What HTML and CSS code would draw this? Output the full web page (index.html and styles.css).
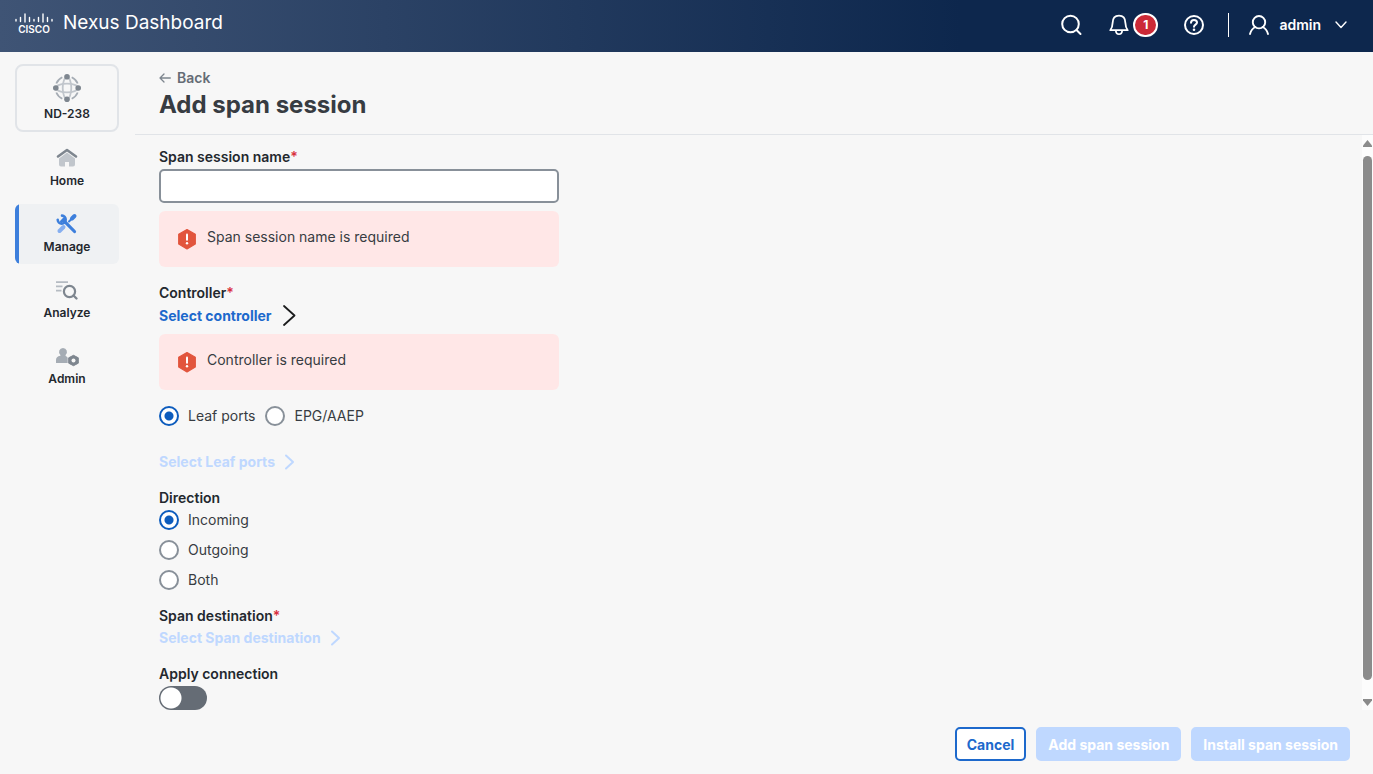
FILE: index.html
```html
<!DOCTYPE html>
<html lang="en">

<head>
    <meta charset="UTF-8">
    <meta name="viewport" content="width=device-width, initial-scale=1.0">
    <title>Nexus Dashboard</title>
    <link rel="stylesheet" href="styles.css">
</head>

<body>
    <header class="topbar">
        <div class="brand">
            <svg class="brand-logo" width="38" height="24" viewBox="0 0 38 24" role="img" aria-label="Cisco">
                <path d="M1 8.500v1.500M5.500 6.500v4M10 3v8M14.500 6.500v4M19 8.500v1.500M23.500 6.500v4M28 3v8M32.500 6.500v4M37 8.500v1.500" stroke="#fff" stroke-width="1.400" stroke-linecap="round" />
                <text x="19" y="22" text-anchor="middle">CISCO</text>
            </svg>
            <span class="brand-name">Nexus Dashboard</span>
        </div>
        <div class="topbar-actions">
            <button type="button" class="icon-btn" aria-label="Search">
                <svg width="22" height="22" viewBox="0 0 22 22" fill="none" stroke="#fff" stroke-width="2" stroke-linecap="round">
                    <circle cx="9.500" cy="10" r="8.300" />
                    <path d="M15.500 16l4 4" />
                </svg>
            </button>
            <button type="button" class="icon-btn bell" aria-label="Notifications">
                <svg width="20" height="22" viewBox="0 0 20 22" fill="none" stroke="#fff" stroke-width="1.800" stroke-linejoin="round">
                    <path d="M1.300 16.200C3 14 3.500 12.500 3.600 9 3.700 4.500 6 1.700 10 1.700s6.300 2.800 6.400 7.300c.1 3.500.6 5 2.300 7.200z" />
                    <path d="M6.800 16.500c.2 2.400 1.300 3.700 3.200 3.700s3-1.300 3.200-3.700" />
                </svg>
                <span class="badge">1</span>
            </button>
            <button type="button" class="icon-btn help" aria-label="Help">
                <svg width="20" height="20" viewBox="0 0 20 20" fill="none" stroke="#fff" stroke-width="2" stroke-linecap="round">
                    <circle cx="10" cy="10" r="9" />
                    <path d="M7 7.800C7 6 8.300 5 10 5s3 1 3 2.500c0 2-3 2.200-3 4.300" />
                    <circle cx="10" cy="14.800" r="1.300" fill="#fff" stroke="none" />
                </svg>
            </button>
            <span class="divider"></span>
            <button type="button" class="icon-btn user">
                <svg width="20" height="20" viewBox="0 0 20 20" fill="none" stroke="#fff" stroke-width="1.900" stroke-linecap="round">
                    <circle cx="10" cy="7.200" r="6.200" />
                    <path d="M1 19c.8-3.400 2.700-5.800 5.500-7M19 19c-.8-3.400-2.700-5.800-5.500-7" />
                </svg>
                <span>admin</span>
                <svg width="12" height="8" viewBox="0 0 12 8" fill="none" stroke="#fff" stroke-width="1.400" stroke-linecap="round" stroke-linejoin="round">
                    <path d="M1 1l5 5.500L11 1" />
                </svg>
            </button>
        </div>
    </header>

    <div class="layout">
        <nav class="sidebar">
            <a href="#" class="nav-card">
                <svg width="28" height="28" viewBox="0 0 28 28" fill="none">
                    <g stroke="#c1c6cc" stroke-width="1.800">
                        <ellipse cx="14" cy="14" rx="4.300" ry="11" />
                        <ellipse cx="14" cy="14" rx="11" ry="4.300" />
                    </g>
                    <path d="M3.300 9.500a12 12 0 0 1 6-6.200M18.700 3.300a12 12 0 0 1 6 6.200M24.700 18.500a12 12 0 0 1-6 6.200M9.300 24.700a12 12 0 0 1-6-6.200" stroke="#a5acb4" stroke-width="1.800" />
                    <g fill="#7e868f">
                        <circle cx="14" cy="2.800" r="2.800" />
                        <circle cx="14" cy="25.200" r="2.800" />
                        <circle cx="2.800" cy="14" r="2.800" />
                        <circle cx="25.200" cy="14" r="2.800" />
                    </g>
                </svg>
                <span>ND-238</span>
            </a>
            <a href="#" class="nav-item">
                <svg width="24" height="24" viewBox="0 0 24 24" fill="none">
                    <path d="M12 7.500l8 6V19.500a2 2 0 0 1-2 2h-4V17h-4v4.500H6a2 2 0 0 1-2-2v-6z" fill="#c1c6cc" />
                    <path d="M3 11.500l9-6.500 9 6.500" stroke="#7e868f" stroke-width="2.600" stroke-linecap="round" stroke-linejoin="round" />
                </svg>
                <span>Home</span>
            </a>
            <a href="#" class="nav-item active" aria-current="page">
                <svg width="24" height="24" viewBox="0 0 24 24" fill="none" stroke-linecap="round">
                    <path d="M8.500 16l-4 4" stroke="#86aff0" stroke-width="4" />
                    <path d="M14 10.500l4-4" stroke="#3d7fdc" stroke-width="2" />
                    <path d="M17 7.500l2.500-2.500" stroke="#3d7fdc" stroke-width="4" />
                    <path d="M8.500 9.300L19.500 20.500" stroke="#3d7fdc" stroke-width="3.200" />
                    <path d="M7 4.600a4 4 0 1 1-4.300 4.200" stroke="#3d7fdc" stroke-width="2.600" />
                    <path d="M6.500 10.500l3-3" stroke="#3d7fdc" stroke-width="3" />
                </svg>
                <span>Manage</span>
            </a>
            <a href="#" class="nav-item">
                <svg width="24" height="24" viewBox="0 0 24 24" fill="none">
                    <path d="M1 5.200h12M1 9.400h6.500M1 13.600h5.500" stroke="#b5bbc2" stroke-width="1.800" />
                    <circle cx="14.500" cy="14.500" r="5.600" stroke="#7e868f" stroke-width="2.200" />
                    <path d="M18.500 18.500l3 3" stroke="#7e868f" stroke-width="2.400" stroke-linecap="round" />
                </svg>
                <span>Analyze</span>
            </a>
            <a href="#" class="nav-item">
                <svg width="24" height="24" viewBox="0 0 24 24" fill="none">
                    <path d="M8 5a4 4 0 0 1 2.600 7v1c1.400.4 2.100 1.200 2.100 2.500V20H1v-3c0-2.300 1.300-3.700 4.400-4.300V12A4 4 0 0 1 8 5z" fill="#a5acb4" />
                    <path d="M18.500 12.300l4.800 2.500v5.400l-4.800 2.500-4.800-2.500v-5.400z" fill="#7e868f" stroke="#7e868f" stroke-linejoin="round" />
                    <circle cx="18.500" cy="17.500" r="2" fill="#f7f7f7" />
                </svg>
                <span>Admin</span>
            </a>
        </nav>

        <main class="page">
            <div class="page-header">
                <a href="#" class="back">
                    <svg width="12" height="10" viewBox="0 0 12 10" fill="none" stroke="#7e868f" stroke-width="1.300" stroke-linecap="round" stroke-linejoin="round">
                        <path d="M11.300 5H1M5 1L1 5l4 4" />
                    </svg>
                    Back
                </a>
                <h1>Add span session</h1>
            </div>

            <div class="scroll-area">
                <form id="span-form" class="span-form">
                    <div class="field">
                        <label class="field-label" for="session-name">Span session name<span class="required">*</span></label>
                        <input type="text" id="session-name" class="text-input" name="session-name">
                        <div class="alert">
                            <svg width="18" height="24" viewBox="0 0 18 24">
                                <path d="M9 2.500l8.300 4.800v9.800L9 22 .7 17.100V7.300z" fill="#e2553d" stroke="#e2553d" stroke-width="1.200" stroke-linejoin="round" />
                                <path d="M9 7.500v5.300" stroke="#fff" stroke-width="2" stroke-linecap="round" />
                                <circle cx="9" cy="16.200" r="1.200" fill="#fff" />
                            </svg>
                            <span>Span session name is required</span>
                        </div>
                    </div>

                    <div class="field">
                        <span class="field-label">Controller<span class="required">*</span></span>
                        <button type="button" class="select-link">
                            Select controller
                            <svg width="14" height="21" viewBox="0 0 14 21" fill="none" stroke="#1b1c1d" stroke-width="1.800" stroke-linecap="round" stroke-linejoin="round">
                                <path d="M2 1l10.500 9.500L2 20" />
                            </svg>
                        </button>
                        <div class="alert">
                            <svg width="18" height="24" viewBox="0 0 18 24">
                                <path d="M9 2.500l8.300 4.800v9.800L9 22 .7 17.100V7.300z" fill="#e2553d" stroke="#e2553d" stroke-width="1.200" stroke-linejoin="round" />
                                <path d="M9 7.500v5.300" stroke="#fff" stroke-width="2" stroke-linecap="round" />
                                <circle cx="9" cy="16.200" r="1.200" fill="#fff" />
                            </svg>
                            <span>Controller is required</span>
                        </div>
                    </div>

                    <div class="source">
                        <div class="radio-row">
                            <label class="radio"><input type="radio" name="source" value="leaf" checked>Leaf ports</label>
                            <label class="radio"><input type="radio" name="source" value="epg">EPG/AAEP</label>
                        </div>
                        <button type="button" class="select-link" disabled>
                            Select Leaf ports
                            <svg width="12" height="16" viewBox="0 0 12 16" fill="none" stroke="#bfd8ff" stroke-width="2" stroke-linecap="round" stroke-linejoin="round">
                                <path d="M3 1.500L10 8l-7 6.500" />
                            </svg>
                        </button>
                    </div>

                    <fieldset class="field">
                        <legend class="field-label">Direction</legend>
                        <div class="radio-column">
                            <label class="radio"><input type="radio" name="direction" value="in" checked>Incoming</label>
                            <label class="radio"><input type="radio" name="direction" value="out">Outgoing</label>
                            <label class="radio"><input type="radio" name="direction" value="both">Both</label>
                        </div>
                    </fieldset>

                    <div class="field">
                        <span class="field-label">Span destination<span class="required">*</span></span>
                        <button type="button" class="select-link" disabled>
                            Select Span destination
                            <svg width="12" height="16" viewBox="0 0 12 16" fill="none" stroke="#bfd8ff" stroke-width="2" stroke-linecap="round" stroke-linejoin="round">
                                <path d="M3 1.500L10 8l-7 6.500" />
                            </svg>
                        </button>
                    </div>

                    <div class="field">
                        <label class="field-label" for="apply">Apply connection</label>
                        <input type="checkbox" id="apply" class="toggle" name="apply" role="switch">
                    </div>
                </form>

                <div class="scrollbar" aria-hidden="true">
                    <svg width="9" height="7" viewBox="0 0 9 7"><path d="M4.500 0L9 5.500V7H0V5.500z" fill="#8b8b8b" /></svg>
                    <span class="scrollbar-thumb"></span>
                    <svg width="9" height="7" viewBox="0 0 9 7"><path d="M4.500 7L9 1.500V0H0v1.500z" fill="#8b8b8b" /></svg>
                </div>
            </div>

            <footer class="page-footer">
                <button type="button" class="btn btn-outline">Cancel</button>
                <button type="submit" form="span-form" class="btn btn-primary" disabled>Add span session</button>
                <button type="button" class="btn btn-primary" disabled>Install span session</button>
            </footer>
        </main>
    </div>
</body>

</html>
```
FILE: styles.css
```css
* {
    box-sizing: border-box;
}

body {
    display: flex;
    flex-direction: column;
    height: 100vh;
    margin: 0;
    background-color: #f7f7f7;
    color: #373c42;
    font-family: Inter, sans-serif;
    font-size: 14px;
    line-height: 20px;
}

button,
input {
    font: inherit;
}

button {
    cursor: pointer;
}

button:disabled {
    cursor: default;
}

svg {
    display: block;
    flex: none;
}

a {
    text-decoration: none;
}

/* Top bar */
.topbar {
    display: flex;
    align-items: center;
    justify-content: space-between;
    height: 52px;
    padding: 0 26px 0 15px;
    flex: none;
    background: linear-gradient(90deg, #3f5475 0%, #0d274d 70%);
    color: #fff;
}

.brand {
    display: flex;
    align-items: center;
    gap: 10px;
    padding-bottom: 6px;
}

.brand-logo text {
    fill: #fff;
    font-size: 10px;
    font-weight: 600;
}

.brand-name {
    font-size: 19px;
    line-height: 24px;
}

.topbar-actions {
    display: flex;
    align-items: center;
    padding-bottom: 2px;
}

.icon-btn {
    display: flex;
    align-items: center;
    padding: 0;
    border: none;
    background: none;
    color: #fff;
}

.bell {
    gap: 4px;
    margin-left: 26px;
}

.badge {
    width: 25px;
    height: 24px;
    border: 2px solid #fff;
    border-radius: 12px;
    background-color: #cc2a37;
    font-size: 12px;
    font-weight: 700;
    line-height: 20px;
    text-align: center;
}

.help {
    margin-left: 26px;
}

.divider {
    width: 1px;
    height: 24px;
    margin: 0 20px 0 24px;
    background-color: #fff;
}

.user {
    gap: 10px;
    font-weight: 600;
}

.user span {
    margin-right: 4px;
}

/* Sidebar */
.layout {
    display: flex;
    flex: 1;
    min-height: 0;
}

.sidebar {
    display: flex;
    flex-direction: column;
    gap: 6px;
    width: 135px;
    padding: 12px 16px 0 15px;
    flex: none;
}

.nav-card,
.nav-item {
    display: flex;
    flex-direction: column;
    align-items: center;
    gap: 2px;
    color: #23282e;
    font-size: 12px;
    font-weight: 600;
    line-height: 20px;
}

.nav-card {
    height: 68px;
    padding-top: 8px;
    border: 2px solid #e1e4e8;
    border-radius: 8px;
}

.nav-item {
    height: 60px;
    padding-top: 7px;
    border-radius: 6px;
}

.nav-item.active {
    background: linear-gradient(90deg, #3d7fdc 4px, #eff1f3 4px);
}

/* Page */
.page {
    display: flex;
    flex-direction: column;
    flex: 1;
    min-width: 0;
}

.page-header {
    padding: 16px 24px 13px;
    border-bottom: 1px solid #e1e4e8;
}

.back {
    display: inline-flex;
    align-items: center;
    gap: 6px;
    color: #656c75;
    font-weight: 600;
    vertical-align: top;
}

h1 {
    margin: 1px 0 0;
    font-size: 24px;
    font-weight: 700;
    line-height: 32px;
}

.scroll-area {
    display: flex;
    justify-content: space-between;
    flex: 1;
    min-height: 0;
}

.span-form {
    display: flex;
    flex-direction: column;
    gap: 16px;
    width: 400px;
    margin-left: 24px;
    padding-top: 12px;
}

.field {
    display: flex;
    flex-direction: column;
    align-items: flex-start;
    gap: 2px;
    margin: 0;
    padding: 0;
    border: none;
}

.field-label {
    padding: 0;
    color: #23282e;
    font-weight: 600;
}

.required {
    color: #d9303e;
}

.text-input {
    width: 100%;
    height: 34px;
    padding: 0 10px;
    border: 2px solid #889099;
    border-radius: 5px;
    background-color: #fff;
}

.alert {
    display: flex;
    gap: 11px;
    width: 100%;
    margin-top: 6px;
    padding: 16px 19px;
    border-radius: 6px;
    background-color: #ffe7e7;
}

.select-link {
    display: flex;
    align-items: center;
    gap: 10px;
    padding: 0;
    border: none;
    background: none;
    color: #1d69cc;
    font-weight: 700;
}

.select-link:disabled {
    gap: 8px;
    color: #bfd8ff;
}

.source {
    display: flex;
    flex-direction: column;
    gap: 26px;
}

.radio-row {
    display: flex;
    gap: 10px;
}

.radio-column {
    display: flex;
    flex-direction: column;
    gap: 10px;
    margin-top: 2px;
}

.radio {
    display: flex;
    align-items: center;
    gap: 9px;
}

.radio input {
    appearance: none;
    width: 20px;
    height: 20px;
    margin: 0;
    border: 2px solid #889099;
    border-radius: 50%;
    background-color: #fff;
}

.radio input:checked {
    border-color: #0d5cbd;
    background: radial-gradient(circle, #0d5cbd 4px, #fff 5px);
}

.toggle {
    appearance: none;
    width: 48px;
    height: 24px;
    margin: 0;
    border-radius: 12px;
    background: radial-gradient(circle at 12px 12px, #fff 10px, #656c75 11px);
}

.scrollbar {
    display: flex;
    flex-direction: column;
    align-items: center;
    gap: 9px;
    width: 11px;
    padding: 5px 0 4px;
    background-color: #fcfcfc;
}

.scrollbar-thumb {
    width: 9px;
    flex: 1;
    margin-bottom: 10px;
    border-radius: 5px;
    background-color: #8b8b8b;
}

.page-footer {
    display: flex;
    justify-content: flex-end;
    gap: 10px;
    padding: 17px 23px 13px;
}

.btn {
    height: 34px;
    padding: 2px 10px 0;
    border: 2px solid #bfd8ff;
    border-radius: 5px;
    font-weight: 700;
}

.btn-outline {
    border-color: #1d69cc;
    background-color: #fff;
    color: #1d69cc;
}

.btn-primary {
    background-color: #bfd8ff;
    color: #fff;
}
```
